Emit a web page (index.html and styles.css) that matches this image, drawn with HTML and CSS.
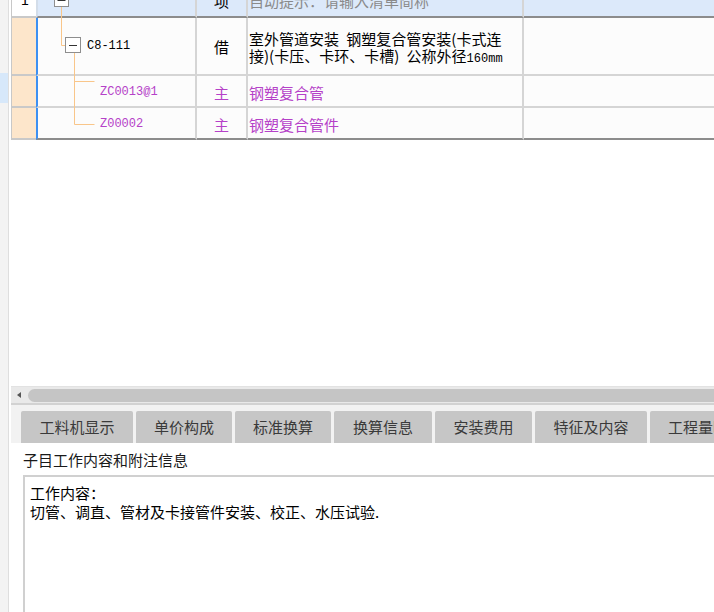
FILE: index.html
```html
<!DOCTYPE html>
<html lang="zh-CN">
<head>
<meta charset="utf-8">
<title>子目</title>
<link rel="stylesheet" href="styles.css">
</head>
<body>
<div class="app">
  <div class="side"><div class="side-sel"></div></div>
  <div class="main">
    <div class="grid-area">
      <div class="grid">
        <div class="row row-head">
          <div class="cell c-num">1</div>
          <div class="cell c-code"></div>
          <div class="cell c-type">项</div>
          <div class="cell c-name hint">自动提示：请输入清单简称</div>
          <div class="cell c-rest"></div>
        </div>
        <div class="row row-de">
          <div class="cell c-num"></div>
          <div class="cell c-code code-de">C8-111</div>
          <div class="cell c-type">借</div>
          <div class="cell c-name multi"><span>室外管道安装 钢塑复合管安装(卡式连</span><span>接)(卡压、卡环、卡槽) 公称外径<small>160mm</small></span></div>
          <div class="cell c-rest"></div>
        </div>
        <div class="row row-sub">
          <div class="cell c-num"></div>
          <div class="cell c-code code-sub">ZC0013@1</div>
          <div class="cell c-type">主</div>
          <div class="cell c-name">钢塑复合管</div>
          <div class="cell c-rest"></div>
        </div>
        <div class="row row-sub row-last">
          <div class="cell c-num"></div>
          <div class="cell c-code code-sub">Z00002</div>
          <div class="cell c-type">主</div>
          <div class="cell c-name">钢塑复合管件</div>
          <div class="cell c-rest"></div>
        </div>
        <svg class="tree" width="120" height="140" viewBox="0 0 120 140">
          <g stroke="#f9c68a" stroke-width="1" fill="none">
            <path d="M50.5 7 V45.5 H54.5"/>
            <path d="M63.5 52.5 V124.5"/>
            <path d="M63.5 81.5 H83.5"/>
            <path d="M63.5 124.5 H83.5"/>
          </g>
          <rect x="43.5" y="-8.5" width="14" height="15" fill="#fff" stroke="#8e8e8e"/>
          <path d="M46.5 0.5 H54.5" stroke="#333" stroke-width="1"/>
          <rect x="54.5" y="37.5" width="15" height="15" fill="#fff" stroke="#8e8e8e"/>
          <path d="M58 45.5 H66" stroke="#333" stroke-width="1"/>
        </svg>
      </div>
    </div>
    <div class="hscroll">
      <span class="arrow"></span>
      <div class="thumb"></div>
    </div>
    <div class="tabs">
      <div class="tab w5">工料机显示</div>
      <div class="tab w4">单价构成</div>
      <div class="tab w4">标准换算</div>
      <div class="tab w4b">换算信息</div>
      <div class="tab w4c">安装费用</div>
      <div class="tab w5">特征及内容</div>
      <div class="tab w3">工程量明细</div>
    </div>
    <div class="detail">
      <div class="detail-title">子目工作内容和附注信息</div>
      <div class="detail-box">
        <div>工作内容：</div>
        <div>切管、调直、管材及卡接管件安装、校正、水压试验.</div>
      </div>
    </div>
  </div>
</div>
</body>
</html>
```

FILE: styles.css
```css
* { box-sizing: border-box; }
html, body { margin: 0; padding: 0; }
body {
  width: 714px;
  height: 612px;
  overflow: hidden;
  background: #fff;
  color: #000;
  font-family: "Noto Sans CJK SC", "Noto Sans", sans-serif;
}
.app { display: flex; height: 612px; overflow: hidden; }
.side {
  width: 9px;
  flex: none;
  background: #f3f3f3;
  border-right: 1px solid #dedede;
  padding-top: 73px;
}
.side-sel { height: 30px; background: #d7e8fa; }
.main {
  flex: 1;
  min-width: 0;
  padding-left: 2px;
  display: flex;
  flex-direction: column;
  overflow: hidden;
}

/* grid */
.grid-area { height: 386px; overflow: hidden; flex: none; }
.grid { position: relative; margin-top: -15px; }
.row {
  display: grid;
  grid-template-columns: 25px 161px 51px 276px 1fr;
}
.cell {
  border-right: 2px solid #d5d5d5;
  border-bottom: 2px solid #d5d5d5;
  display: flex;
  align-items: center;
  font-size: 15px;
  line-height: 17px;
  white-space: nowrap;
  overflow: hidden;
  background: #fcfcfc;
}
.c-num {
  border-left: 1px solid #c8c8c8;
  border-right: none;
  background: #fde6cb;
  border-bottom-color: #c9c9c9;
}
.c-code { border-left: 2px solid #3d90f2; }
.c-type { justify-content: center; }
.c-name { padding-left: 1px; }
.c-rest { border-right: none; }

.row-head { height: 33px; }
.row-head .cell { background: #dce9fa; border-bottom-color: #8c8c8c; }
.row-head .c-num {
  background: #fff;
  border-bottom-color: #c9c9c9;
  padding-left: 9px;
  font-family: "Liberation Sans", sans-serif;
  font-size: 14px;
}
.row-head .c-code { border-left-color: #d3dde9; }
.hint { color: #8a8a8a; }

.row-de { height: 58px; }
.row-sub { height: 32px; }
.row-sub .cell { padding-top: 2px; }
.row-last .cell { border-bottom-color: #8c8c8c; }
.row-last .c-num { border-bottom-color: #c9c9c9; }

.code-de, .code-sub {
  font-family: "Liberation Mono", monospace;
  font-size: 12px;
}
.code-de { padding-left: 49px; }
.code-sub { padding-left: 62px; color: #b541c8; }
.row-sub .c-type, .row-sub .c-name { color: #b541c8; }

.multi {
  flex-direction: column;
  align-items: flex-start;
  justify-content: flex-start;
  padding-top: 12px;
  font-size: 15px;
}
.multi span { display: block; height: 17px; line-height: 17px; word-spacing: 4px; }
.multi small { font-family: "Liberation Mono", monospace; font-size: 12px; word-spacing: 0; }

.tree {
  position: absolute;
  left: 0;
  top: 15px;
  overflow: visible;
}

/* horizontal scrollbar */
.hscroll {
  height: 19px;
  flex: none;
  background: #e9e9e9;
  border-top: 1px solid #e2e2e2;
  border-bottom: 2px solid #d2d2d2;
  display: flex;
  align-items: center;
  padding-left: 6px;
  overflow: hidden;
}
.arrow {
  width: 0;
  height: 0;
  border-top: 3px solid transparent;
  border-bottom: 3px solid transparent;
  border-right: 4px solid #555;
  flex: none;
}
.thumb {
  margin-left: 7px;
  flex: 1;
  height: 13px;
  margin-right: -20px;
  background: #c5c5c5;
  border-radius: 7px;
}

/* tabs */
.tabs {
  flex: none;
  height: 38px;
  background: #f2f2f2;
  padding: 6px 0 0 10px;
  display: flex;
  gap: 3px;
  overflow: hidden;
}
.tab {
  flex: none;
  height: 32px;
  background: #c6c6c6;
  border-radius: 2px 2px 0 0;
  font-size: 15px;
  line-height: 32px;
  color: #3a3a3a;
  text-align: center;
  white-space: nowrap;
  overflow: hidden;
}
.w5 { width: 112px; }
.w4 { width: 96px; }
.w4b { width: 98px; }
.w4c { width: 97px; }
.w3 { width: 100px; text-align: left; padding-left: 18px; }

/* detail */
.detail {
  flex: 1;
  min-height: 0;
  background: #fff;
  padding: 7px 0 0 12px;
  display: flex;
  flex-direction: column;
}
.detail-title {
  font-size: 15px;
  line-height: 20px;
  color: #1a1a1a;
  flex: none;
}
.detail-box {
  flex: 1;
  margin-top: 5px;
  margin-right: -20px;
  border: 2px solid #d0d0d0;
  border-bottom: none;
  padding: 6px 5px 0;
  font-size: 15px;
  line-height: 19px;
}
```
